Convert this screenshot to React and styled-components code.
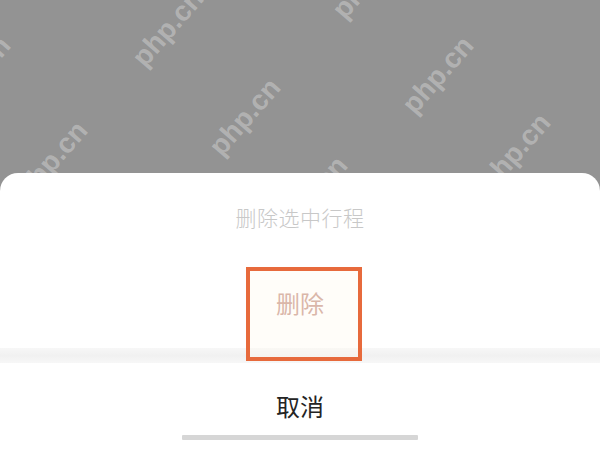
import React from 'react';
import styled, {createGlobalStyle} from "styled-components";

const Global = createGlobalStyle`
    html, body {
        margin: 0;
        padding: 0;
        background: #939393;
        font-family: "Noto Sans CJK SC", "Noto Sans", sans-serif;
    }
`

const Screen = styled.div`
    width: 600px;
    height: 450px;
    overflow: hidden;
    display: flex;
    flex-direction: column;
    background: #939393;
`

const Backdrop = styled.div`
    position: relative;
    height: 173px;
    flex-shrink: 0;
`

const Mark = styled.span`
    position: absolute;
    transform: translate(-50%, -50%) rotate(-49deg);
    font-family: "Liberation Sans", Arial, sans-serif;
    font-weight: bold;
    font-size: 28px;
    color: rgba(255, 255, 255, 0.3);
    white-space: nowrap;
`

const Sheet = styled.div`
    position: relative;
    flex: 1;
    background: #fff;
    border-radius: 18px 18px 0 0;
    display: flex;
    flex-direction: column;
`

const Title = styled.div`
    height: 88px;
    display: flex;
    align-items: center;
    justify-content: center;
    font-size: 21px;
    font-weight: 300;
    color: #c8c8c8;
    letter-spacing: 0.5px;
`

const Action = styled.div`
    height: ${props => props.h}px;
    padding: ${props => props.pad || "0"};
    box-sizing: border-box;
    display: flex;
    align-items: center;
    justify-content: center;
    font-size: 24px;
    color: ${props => props.danger ? "#c28a7b" : "#242424"};
`

const Gap = styled.div`
    height: 15px;
    background: linear-gradient(#f7f7f7, #f1f1f1 50%, #f7f7f7);
`

const HomeBar = styled.div`
    width: 236px;
    height: 5px;
    margin: 0 auto;
    background: #d6d6d6;
    border-radius: 1px;
`

const Highlight = styled.div`
    position: absolute;
    left: 246px;
    top: 94px;
    width: 116px;
    height: 94px;
    box-sizing: border-box;
    border: 4px solid #e76a3c;
    background: rgba(255, 251, 240, 0.4);
`

const marks = [
    [-25, 75], [168, 28], [368, -20], [52, 160], [245, 117], [438, 75], [312, 195], [515, 152]
]

export default () => {
    return(
        <Screen>
            <Global/>
            <Backdrop>
                {marks.map(([x, y], i) => (
                    <Mark key={i} style={{left: x, top: y}}>php.cn</Mark>
                ))}
            </Backdrop>
            <Sheet>
                <Title>删除选中行程</Title>
                <Action danger h={87} pad="0 0 5px">删除</Action>
                <Gap/>
                <Action h={72} pad="12px 0 0">取消</Action>
                <HomeBar/>
                <Highlight/>
            </Sheet>
        </Screen>
    )
}
